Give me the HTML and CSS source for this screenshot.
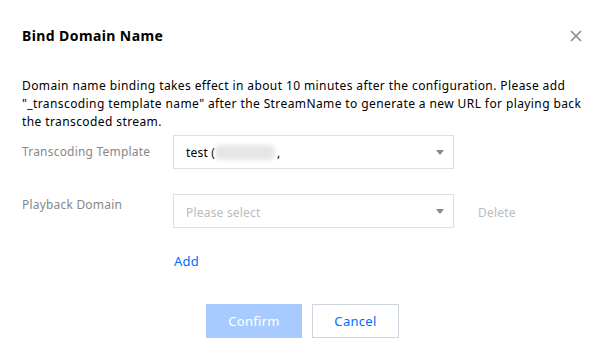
FILE: index.html
```html
<!DOCTYPE html>
<html lang="en">
<head>
  <meta charset="UTF-8" />
  <title>Bind Domain Name</title>
  <link rel="stylesheet" href="styles.css">
</head>
<body>
  <div class="dialog">
    <div class="dialog-head">
      <h2 class="dialog-title">Bind Domain Name</h2>
      <button class="close" aria-label="Close">
        <svg width="12" height="12" viewBox="0 0 12 12"><path d="M1 1L11 11M11 1L1 11" stroke="#888" stroke-width="1.6" fill="none"/></svg>
      </button>
    </div>

    <p class="desc">Domain name binding takes effect in about 10 minutes after the configuration. Please add "_transcoding template name" after the StreamName to generate a new URL for playing back the transcoded stream.</p>

    <div class="form">
      <div class="row row-center">
        <label class="label">Transcoding Template</label>
        <div class="select">
          <span class="value">test (<span class="masked"></span>,</span>
          <span class="caret"></span>
        </div>
      </div>

      <div class="row">
        <label class="label label-top">Playback Domain</label>
        <div class="select">
          <span class="placeholder">Please select</span>
          <span class="caret"></span>
        </div>
        <a class="delete">Delete</a>
      </div>

      <a class="add">Add</a>
    </div>

    <div class="footer">
      <button class="btn btn-primary">Confirm</button>
      <button class="btn">Cancel</button>
    </div>
  </div>
</body>
</html>
```

FILE: styles.css
```css
* {
  box-sizing: border-box;
  margin: 0;
  padding: 0;
}

body {
  font-family: 'Noto Sans', 'Open Sans', sans-serif;
  background: #fff;
  color: #000;
  font-size: 12px;
  letter-spacing: 0.2px;
}

.dialog {
  width: 605px;
  padding: 25px 22px 0;
}

.dialog-head {
  display: flex;
  justify-content: space-between;
  align-items: center;
  height: 20px;
}

.dialog-title {
  font-size: 14px;
  font-weight: bold;
  color: #000;
  letter-spacing: 0.4px;
}

.close {
  border: none;
  background: none;
  width: 12px;
  height: 12px;
  margin-right: 1px;
  margin-top: 2px;
  display: flex;
}

.desc {
  margin-top: 32px;
  line-height: 18px;
  color: #000;
  letter-spacing: 0.4px;
}

.form {
  margin-top: 4px;
}

.row {
  display: flex;
  align-items: flex-start;
  margin-bottom: 25px;
}

.row-center {
  align-items: center;
}

.label {
  width: 151px;
  color: #888;
  line-height: 18px;
}

.label-top {
  padding-top: 2px;
}

.select {
  width: 281px;
  height: 34px;
  border: 1px solid #dddfe4;
  display: flex;
  align-items: center;
  justify-content: space-between;
  padding: 0 9px 0 12px;
}

.value {
  display: flex;
  align-items: center;
  color: #000;
}

.masked {
  display: inline-block;
  width: 60px;
  height: 15px;
  margin: 0 2px 0 0;
  background: #e6e6e6;
  border-radius: 6px;
  filter: blur(2px);
}

.placeholder {
  color: #bbb;
  margin-top: 2px;
}

.caret {
  width: 0;
  height: 0;
  border-left: 4px solid transparent;
  border-right: 4px solid transparent;
  border-top: 5px solid #888;
}

.delete {
  color: #bbb;
  margin-left: 24px;
  line-height: 34px;
  padding-top: 2px;
}

.add {
  display: block;
  margin-left: 152px;
  color: #006eff;
  font-size: 13px;
  line-height: 18px;
  margin-top: -3px;
}

.footer {
  display: flex;
  justify-content: center;
  gap: 10px;
  margin-top: 34px;
}

.btn {
  height: 34px;
  width: 87px;
  font-family: inherit;
  font-size: 13px;
  letter-spacing: 0.3px;
  background: #fff;
  color: #006eff;
  border: 1px solid #cfd5de;
}

.btn-primary {
  width: 96px;
  background: #a8cbff;
  color: #fff;
  border-color: #a8cbff;
}
```
